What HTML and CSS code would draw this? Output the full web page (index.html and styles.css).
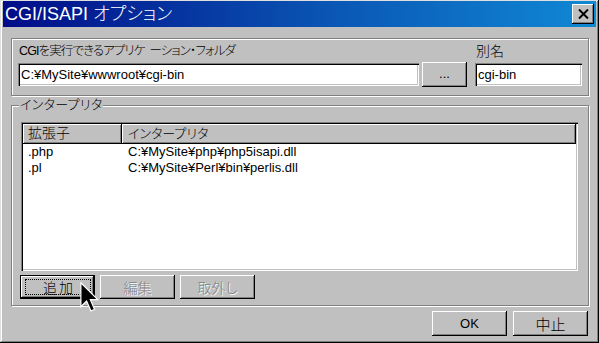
FILE: index.html
```html
<!DOCTYPE html>
<html lang="ja">
<head>
<meta charset="utf-8">
<title>CGI/ISAPI オプション</title>
<link rel="stylesheet" href="styles.css">
</head>
<body>
<div class="window">
  <div class="titlebar">
    <span class="title">CGI/ISAPI オプション</span>
    <div class="close"><svg width="11" height="10" viewBox="0 0 11 10"><path d="M1 0.5 L10 9.5 M10 0.5 L1 9.5" stroke="#000" stroke-width="2" fill="none"/></svg></div>
  </div>
  <div class="content">
    <div class="group group-folder">
      <div class="col col-path">
        <div class="lbl lbl-path">CGIを実行できるアプリケ<span class="gap"> </span>ーション・フォルダ</div>
        <div class="row">
          <div class="field field-path">C:¥MySite¥wwwroot¥cgi-bin</div>
          <div class="btn btn-browse">...</div>
        </div>
      </div>
      <div class="col col-alias">
        <div class="lbl">別名</div>
        <div class="row">
          <div class="field field-alias">cgi-bin</div>
        </div>
      </div>
    </div>
    <fieldset class="group group-interp">
      <legend>インタープリタ</legend>
      <div class="listview">
        <div class="lv-header">
          <div class="hcell c1">拡張子</div>
          <div class="hcell c2">インタープリタ</div>
        </div>
        <div class="lv-row"><span class="c1">.php</span><span class="c2">C:¥MySite¥php¥php5isapi.dll</span></div>
        <div class="lv-row"><span class="c1">.pl</span><span class="c2">C:¥MySite¥Perl¥bin¥perlis.dll</span></div>
      </div>
      <div class="btnrow">
        <div class="btn btn-focus"><span class="focus">追加</span></div>
        <div class="btn btn-disabled">編集</div>
        <div class="btn btn-disabled">取外し</div>
      </div>
    </fieldset>
    <div class="footer">
      <div class="btn btn-dlg">OK</div>
      <div class="btn btn-dlg btn-cjk">中止</div>
    </div>
  </div>
  <svg class="cursor" width="19" height="30" viewBox="0 0 12.5 20"><path d="M0.5 0.5 V16.5 L4.3 12.7 L7.2 19.3 L9.6 18.2 L6.8 11.8 L11.8 11.8 Z" fill="#000" stroke="#fff" stroke-width="0.8" stroke-linejoin="miter"/></svg>
</div>
</body>
</html>
```

FILE: styles.css
```css
* { box-sizing: border-box; }
html, body { margin: 0; padding: 0; }
body {
  width: 599px;
  height: 343px;
  overflow: hidden;
  background: #c0c0c0;
  font-family: "Liberation Sans", "Noto Sans CJK JP", sans-serif;
  font-size: 13px;
  font-weight: 300;
  color: #000;
  font-feature-settings: "palt";
}
.window {
  position: relative;
  width: 599px;
  height: 343px;
  background: #c0c0c0;
  padding: 1px 3px 3px 3px;
  box-shadow: inset -1px -1px #000, inset 1px 1px #dfdfdf, inset -2px -2px #808080, inset 2px 2px #fff;
  display: flex;
  flex-direction: column;
}
.titlebar {
  height: 26px;
  flex: none;
  background: linear-gradient(90deg, #000c88 0%, #0a56b4 55%, #1088d4 100%);
  display: flex;
  align-items: center;
  justify-content: space-between;
  padding: 0 2px 0 2px;
  color: #fff;
}
.title {
  font-size: 18px;
  line-height: 26px;
  white-space: nowrap;
}
.close {
  width: 22px;
  height: 20px;
  background: #c0c0c0;
  box-shadow: inset -1px -1px #000, inset 1px 1px #fff, inset -2px -2px #808080;
  display: flex;
  align-items: center;
  justify-content: center;
  padding-bottom: 1px;
}
.content {
  padding: 11px 7px 0 8px;
  display: flex;
  flex-direction: column;
}
.group {
  border: 1px solid #808080;
  box-shadow: 1px 1px 0 #fff, inset 1px 1px 0 #fff;
}
.group-folder {
  width: 578px;
  height: 58px;
  padding: 4px 6px 0 6px;
  display: flex;
  gap: 8px;
}
.col { display: flex; flex-direction: column; }
.col-path { width: 449px; }
.col-alias { width: 107px; }
.lbl {
  line-height: 16px;
  padding-left: 1px;
  white-space: nowrap;
  font-size: 14px;
}
.lbl-path { font-size: 12.5px; letter-spacing: -0.9px; }
.lbl-path .gap { display: inline-block; width: 5px; }
.row {
  margin-top: 3px;
  height: 25px;
  display: flex;
  align-items: center;
  gap: 3px;
}
.field {
  height: 23px;
  background: #fff;
  box-shadow: inset 1px 1px #808080, inset 2px 2px #000, inset -1px -1px #fff, inset -2px -2px #c0c0c0;
  padding: 0 3px;
  line-height: 23px;
  white-space: nowrap;
  overflow: hidden;
}
.field-path { width: 401px; }
.field-alias { width: 107px; }
.btn {
  background: #c0c0c0;
  box-shadow: inset -1px -1px #000, inset 1px 1px #fff, inset -2px -2px #808080;
  display: flex;
  align-items: center;
  justify-content: center;
  white-space: nowrap;
}
.btn-browse { width: 45px; height: 25px; padding-bottom: 2px; }
.group-interp {
  margin: 2px 0 0 0;
  width: 578px;
  min-width: 0;
  padding: 10px 10px 6px 9px;
}
.group-interp legend {
  margin-left: -2px;
  padding: 0 1px;
  line-height: 14px;
  background: #c0c0c0;
  letter-spacing: 0.3px;
}
.listview {
  height: 149px;
  background: #fff;
  padding: 2px;
  box-shadow: inset 1px 1px #808080, inset 2px 2px #000, inset -1px -1px #fff, inset -2px -2px #c0c0c0;
}
.lv-header {
  display: flex;
  height: 20px;
}
.hcell {
  background: #c0c0c0;
  box-shadow: inset -1px -1px #000, inset 1px 1px #fff, inset -2px -2px #808080;
  line-height: 19px;
  padding-left: 5px;
  white-space: nowrap;
}
.hcell.c1 { width: 99px; font-size: 14px; }
.hcell.c2 { flex: 1; padding-left: 6px; }
.lv-row {
  display: flex;
  line-height: 16px;
  white-space: nowrap;
}
.lv-row .c1 { width: 99px; padding-left: 5px; }
.lv-row .c2 { padding-left: 6px; }
.btnrow {
  margin-top: 4px;
  display: flex;
  gap: 5px;
}
.btnrow .btn { width: 75px; height: 24px; font-size: 14px; }
.btn-focus {
  margin-left: -1px;
  padding: 4px 4px 4px 5px;
  box-shadow: inset 0 0 0 1px #000, inset -2px -2px #000, inset 2px 2px #fff, inset -3px -3px #808080;
}
.btn-focus .focus {
  flex: 1;
  align-self: stretch;
  border: 1px dotted #000;
  display: flex;
  align-items: center;
  justify-content: center;
  letter-spacing: 2px;
  padding-left: 2px;
}
.btn-disabled {
  color: #808080;
  text-shadow: 1px 1px 0 #fff;
}
.footer {
  margin-top: 5px;
  display: flex;
  justify-content: flex-end;
  gap: 6px;
  padding-right: 1px;
}
.btn-dlg { width: 75px; height: 25px; }
.btn-cjk { font-size: 15px; }
.cursor {
  position: absolute;
  left: 80px;
  top: 282px;
}
```
